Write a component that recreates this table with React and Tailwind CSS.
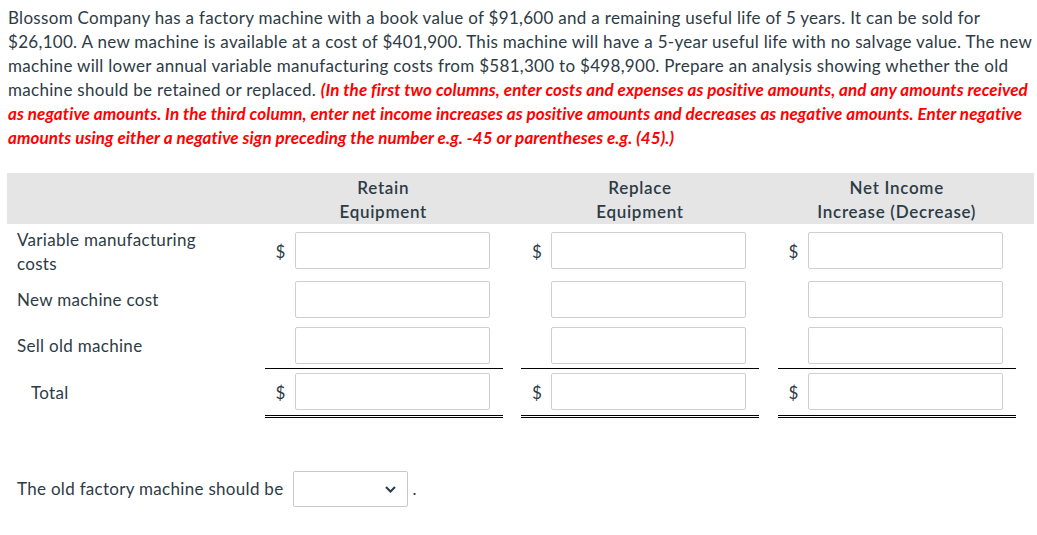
import React from 'react';

const rows = [
    { label: 'Variable manufacturing costs', dollar: true, h: 'h-[52px]', labelCls: 'mt-[4px] pl-[9px] w-[225px]' },
    { label: 'New machine cost', dollar: false, h: 'h-[47px]', labelCls: 'pl-[9px]' },
    { label: 'Sell old machine', dollar: false, h: 'h-[46px]', labelCls: 'pl-[9px]', lineBelow: true },
];

function AmountCell({ dollar, border }) {
    return (
        <div className="flex">
            <div className={`flex items-center w-[238px] h-full ${border || ''}`}>
                <span className="w-[30px] pl-[11px] pt-[3px] text-[#2d3b45]">{dollar ? '$' : ''}</span>
                <input
                    type="text"
                    className="w-[195px] h-[37px] border border-[#cfcfcf] rounded-[2px] bg-white outline-none"
                />
            </div>
        </div>
    );
}

export default function App() {
    return (
        <div className="w-[1037px] min-h-[535px] bg-white text-[17px] leading-[24px] tracking-[0.3px] text-[#2d3b45]" style={{ fontFamily: 'Lato, "Open Sans", sans-serif' }}>
            <p className="px-[8px] pt-[6px] pr-[4px]">
                Blossom Company has a factory machine with a book value of $91,600 and a remaining useful life of 5 years. It can be sold for $26,100. A new machine is available at a cost of $401,900. This machine will have a 5-year useful life with no salvage value. The new machine will lower annual variable manufacturing costs from $581,300 to $498,900. Prepare an analysis showing whether the old machine should be retained or replaced.{' '}
                <span className="text-[#ff0000] font-bold italic tracking-[0.1px]">
                    (In the first two columns, enter costs and expenses as positive amounts, and any amounts received as negative amounts. In the third column, enter net income increases as positive amounts and decreases as negative amounts. Enter negative amounts using either a negative sign preceding the number e.g. -45 or parentheses e.g. (45).)
                </span>
            </p>

            <div className="ml-[8px] mt-[23px] w-[1026px]">
                {/* header band */}
                <div className="grid grid-cols-4 bg-[#e5e5e5] h-[51px] pt-[3px] -ml-[1px]">
                    <div />
                    {['Retain|Equipment', 'Replace|Equipment', 'Net Income|Increase (Decrease)'].map(h => (
                        <div key={h} className="w-[238px] text-center pl-[1px] font-semibold tracking-[0.7px]">
                            {h.split('|').map(t => <div key={t}>{t}</div>)}
                        </div>
                    ))}
                </div>

                {rows.map(r => (
                    <div key={r.label} className={`grid grid-cols-4 ${r.h}`}>
                        <div className="flex items-center">
                            <span className={r.labelCls}>{r.label}</span>
                        </div>
                        {[0, 1, 2].map(i => (
                            <AmountCell key={i} dollar={r.dollar} border={r.lineBelow ? 'border-b border-black' : ''} />
                        ))}
                    </div>
                ))}

                {/* total row */}
                <div className="grid grid-cols-4 h-[49px]">
                    <div className="flex items-center pl-[23px] pb-[2px]">Total</div>
                    {[0, 1, 2].map(i => (
                        <AmountCell key={i} dollar border="border-b-[3px] border-double border-black pb-[1px]" />
                    ))}
                </div>

                <div className="flex items-center mt-[53px] pl-[9px]">
                    <span>The old factory machine should be</span>
                    <div className="relative ml-[10px] w-[115px] h-[36px] border border-[#c8c8c8] rounded-[2px] bg-white">
                        <svg className="absolute right-[11px] top-[14px]" width="11" height="7" viewBox="0 0 11 7" fill="none">
                            <path d="M1 1 L5.5 5.5 L10 1" stroke="#2d3b45" strokeWidth="2" />
                        </svg>
                    </div>
                    <span className="ml-[4px]">.</span>
                </div>
            </div>
        </div>
    );
}
